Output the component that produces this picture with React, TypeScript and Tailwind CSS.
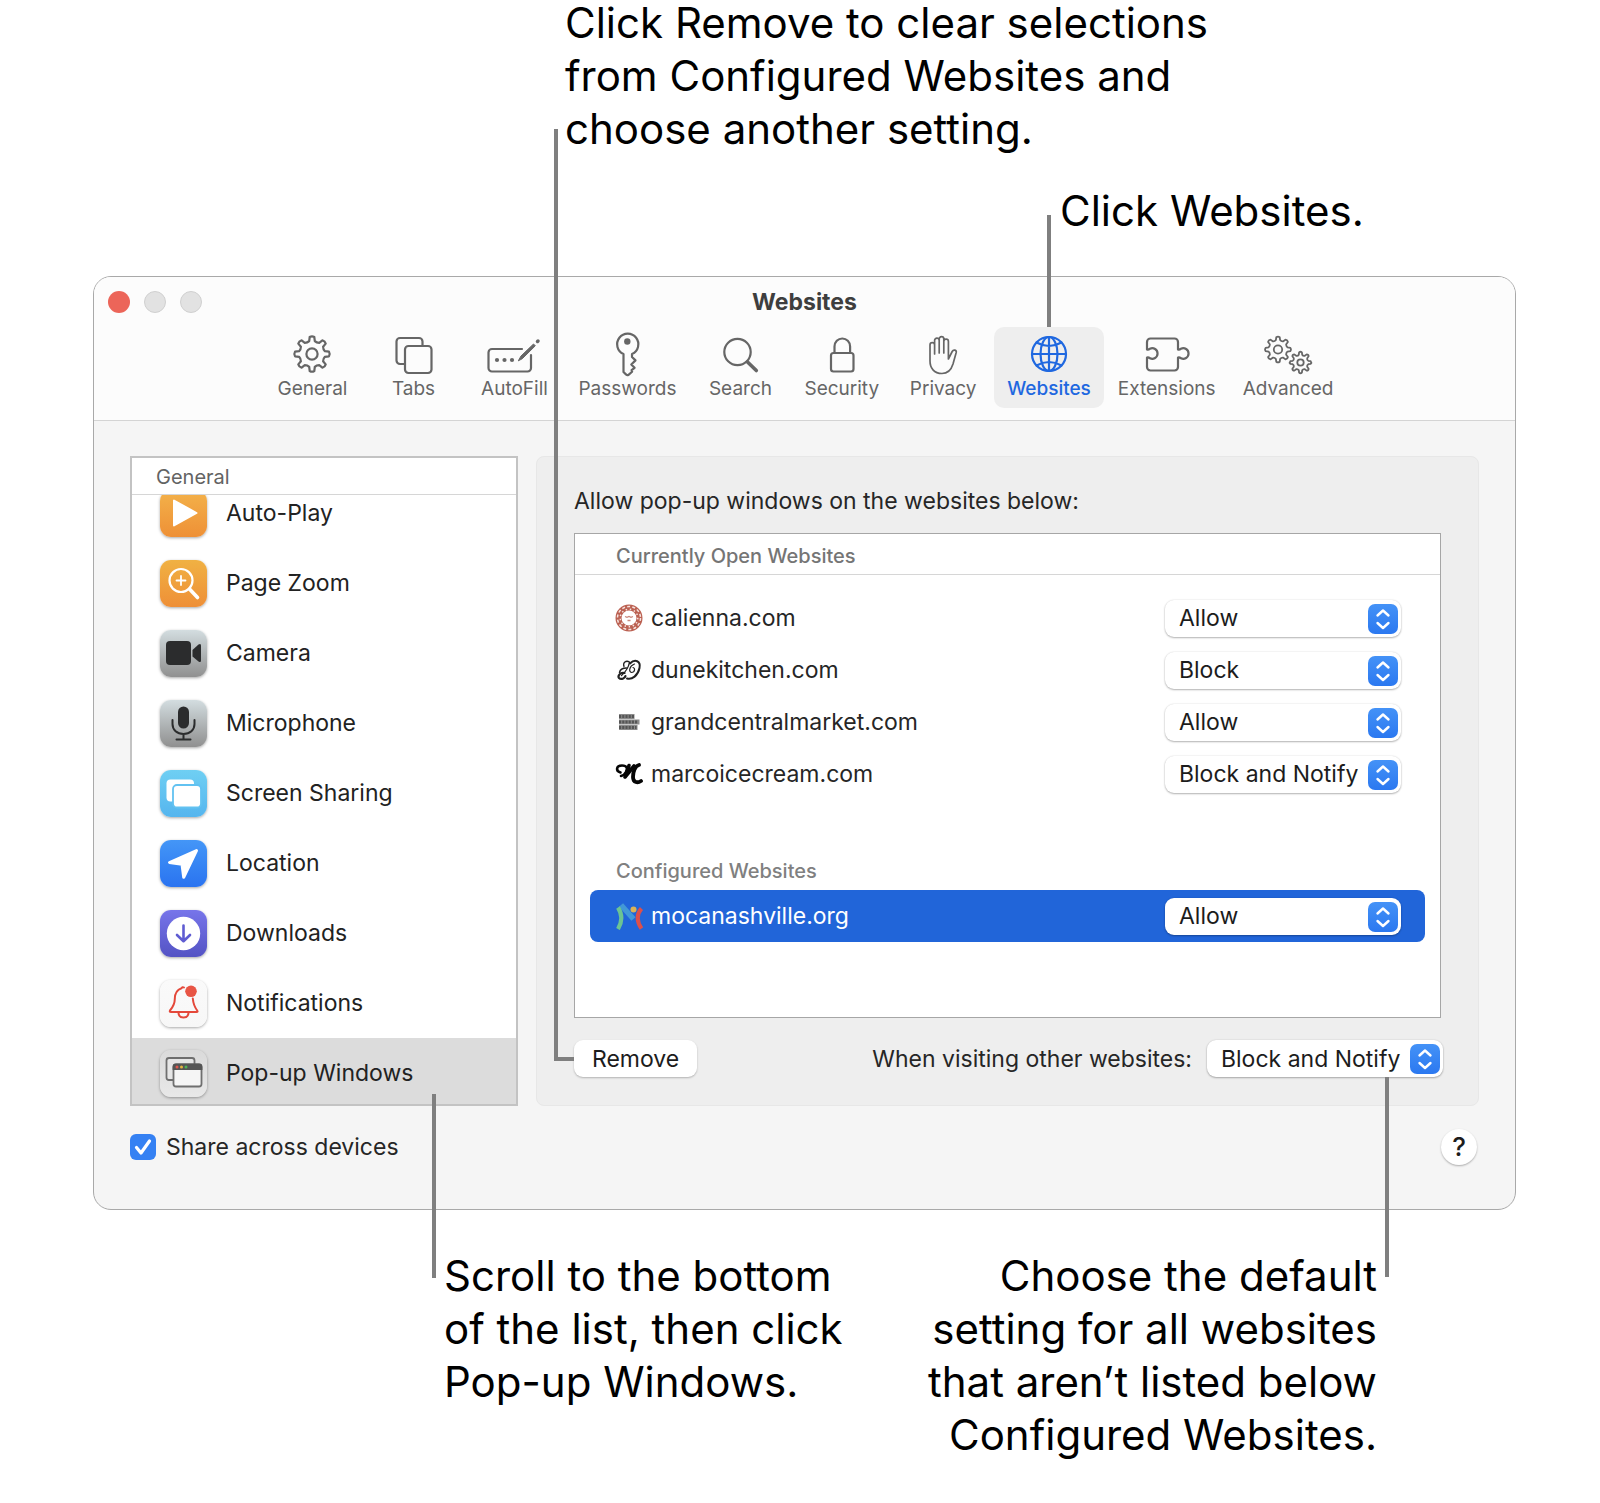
import React from 'react';

const CALLOUT = 'text-[42px] leading-[53px] text-black';
const LEADER = 'absolute z-10 pointer-events-none border-[#7f7f7f]';

// Outline of a cog wheel with flat-topped teeth
const gearPath = (cx: number, cy: number, outer: number, inner: number, teeth: number) => {
  const step = (Math.PI * 2) / teeth;
  const pt = (r: number, a: number) =>
    `${(cx + r * Math.sin(a)).toFixed(1)} ${(cy - r * Math.cos(a)).toFixed(1)}`;
  let d = '';
  for (let i = 0; i < teeth; i++) {
    const a = i * step;
    d += `${i === 0 ? 'M' : 'L'}${pt(inner, a - step * 0.27)}`;
    d += `L${pt(outer - 0.6, a - step * 0.17)}`;
    d += `Q${pt(outer + 0.6, a)} ${pt(outer - 0.6, a + step * 0.17)}`;
    d += `L${pt(inner, a + step * 0.27)}`;
    d += `Q${pt(inner - 1.2, a + step * 0.5)} ${pt(inner, a + step * 0.73)}`;
  }
  return d + 'Z';
};

const tools: { name: string; icon: React.ReactNode }[] = [
  {
    name: 'General',
    icon: (
      <>
        <path d={gearPath(28, 22, 17.8, 13.2, 8)} />
        <circle cx="28" cy="22" r="5.6" />
      </>
    ),
  },
  {
    name: 'Tabs',
    icon: (
      <>
        <path d="M20 32h-5a3.5 3.5 0 0 1-3.5-3.5v-19A3.5 3.5 0 0 1 15 6h19a3.5 3.5 0 0 1 3.5 3.5V14" />
        <rect x="20" y="14" width="26.5" height="27" rx="3.5" />
      </>
    ),
  },
  {
    name: 'AutoFill',
    icon: (
      <>
        <path d="M36 17H6a3.5 3.5 0 0 0-3.5 3.5V36A3.5 3.5 0 0 0 6 39.500h35.500A3.500 3.500 0 0 0 45 36V23" />
        <path d="M32.500 28.500L35 24l12.500-12 1.800 1.800L36.500 26.500z" fill="currentColor" strokeWidth="1" />
        <path d="M51.500 9.500l.5-.5" strokeWidth="3.500" />
        <g fill="currentColor" stroke="none">
          <circle cx="11" cy="28" r="2.100" />
          <circle cx="18.500" cy="28" r="2.100" />
          <circle cx="26" cy="28" r="2.100" />
        </g>
      </>
    ),
  },
  {
    name: 'Passwords',
    icon: (
      <>
        <path d="M24.500 22A10.600 10.600 0 1 1 33 22v3l3.500 3.400-4.200 4.100 3.300 3.300-3 2.400.5 1.500-3.600 3.200q-1.300.8-2.300-.3L24.500 40z" />
        <circle cx="28.300" cy="9.500" r="3.200" fill="currentColor" stroke="none" />
      </>
    ),
  },
  {
    name: 'Search',
    icon: (
      <>
        <circle cx="25.500" cy="20" r="13.200" />
        <path d="M35.500 30l8.800 8.500" strokeWidth="3.600" />
      </>
    ),
  },
  {
    name: 'Security',
    icon: (
      <>
        <rect x="17" y="21" width="22.500" height="18.500" rx="2.500" />
        <path d="M20.500 21v-6.500a7.800 8 0 0 1 15.600 0V21" />
      </>
    ),
  },
  {
    name: 'Privacy',
    icon: (
      <path
        strokeWidth="1.700"
        d="M15 29V13a2.300 2.300 0 0 1 4.600 0V22M19.600 21V8.500a2.300 2.300 0 0 1 4.600 0V21M24.200 20V7a2.300 2.300 0 0 1 4.600 0V21M28.800 20V9.500a2.300 2.300 0 0 1 4.600 0V27l3.800-7.500c1.300-2.500 4.600-1.500 4 1L38 32c-2 6.500-6 9.500-11 9.500-8 0-12-5.500-12-12.500"
      />
    ),
  },
  {
    name: 'Websites',
    icon: (
      <>
        <circle cx="28" cy="22" r="17" />
        <ellipse cx="28" cy="22" rx="8.500" ry="17" />
        <path d="M28 5v34M11 22h34M15.500 10.500q12.500 7 25 0M15.500 33.500q12.500-7 25 0" />
      </>
    ),
  },
  {
    name: 'Extensions',
    icon: (
      <path d="M8 17.500V10a3.500 3.500 0 0 1 3.500-3.500h24A3.500 3.500 0 0 1 39 10v7.500q1.500.5 3-.8a5.300 5.300 0 1 1 0 9.600q-1.500-1.300-3-.8V35a3.500 3.500 0 0 1-3.500 3.500h-24A3.500 3.500 0 0 1 8 35v-9.500q1.500-.5 3 .8a5.300 5.300 0 1 0 0-9.600q-1.500 1.300-3 .8z" />
    ),
  },
  {
    name: 'Advanced',
    icon: (
      <g strokeWidth="1.800">
        <path d={gearPath(18, 17.5, 13, 9.8, 8)} />
        <circle cx="18" cy="17.500" r="4.200" />
        <path d={gearPath(40.5, 30.5, 10.8, 8, 8)} />
        <circle cx="40.500" cy="30.500" r="3.200" />
      </g>
    ),
  },
];

const categories: { name: string; tile: string; icon: React.ReactNode }[] = [
  {
    name: 'Auto-Play',
    tile: 'from-[#f3b24a] to-[#ee9036]',
    icon: <path d="M14 10.500v25l22.500-12.500z" fill="#fff" stroke="#fff" strokeWidth="2" strokeLinejoin="round" />,
  },
  {
    name: 'Page Zoom',
    tile: 'from-[#f0b143] to-[#ee8f37]',
    icon: (
      <g fill="none" stroke="#fff" strokeLinecap="round">
        <circle cx="21" cy="20.500" r="11.500" strokeWidth="2.200" />
        <path d="M29.500 29l8 8.500" strokeWidth="3.600" />
        <path d="M21 16v9M16.500 20.500h9" strokeWidth="1.800" />
      </g>
    ),
  },
  {
    name: 'Camera',
    tile: 'from-[#d3dde0] to-[#909090]',
    icon: (
      <g fill="#2b2c2d">
        <rect x="6" y="11" width="25" height="24" rx="4" />
        <path d="M32.500 20l6-5.500q2.500-1.500 2.500 1v15q0 2.500-2.500 1l-6-5z" />
      </g>
    ),
  },
  {
    name: 'Microphone',
    tile: 'from-[#d3dde0] to-[#909090]',
    icon: (
      <g fill="none" stroke="#2b2c2d" strokeWidth="2" strokeLinecap="round">
        <rect x="18" y="6.500" width="11" height="22" rx="5.500" fill="#2b2c2d" stroke="none" />
        <path d="M12.500 20v4c0 6 4.500 10 11 10s11-4 11-10v-4M23.500 34v5.500M16.500 39.500h14" />
      </g>
    ),
  },
  {
    name: 'Screen Sharing',
    tile: 'from-[#6fcff3] to-[#55b5ee]',
    icon: (
      <g fill="#fff">
        <rect x="6.500" y="9.500" width="27.500" height="22" rx="4" />
        <rect x="13" y="15" width="28" height="22.500" rx="4" stroke="#62c2f1" strokeWidth="1.800" />
      </g>
    ),
  },
  {
    name: 'Location',
    tile: 'from-[#4496f7] to-[#2a73f0]',
    icon: (
      <path
        d="M36.500 10.500L9.500 22.500l12.500 1.800 1.700 13z"
        fill="#fff"
        stroke="#fff"
        strokeWidth="3"
        strokeLinejoin="round"
      />
    ),
  },
  {
    name: 'Downloads',
    tile: 'from-[#7775ea] to-[#5453c4]',
    icon: (
      <>
        <circle cx="23.500" cy="23.500" r="16.700" fill="#fff" />
        <path
          d="M23.500 15.500V31M17 25l6.500 6.200L30 25"
          fill="none"
          stroke="#5f5cd2"
          strokeWidth="2.600"
          strokeLinecap="round"
          strokeLinejoin="round"
        />
      </>
    ),
  },
  {
    name: 'Notifications',
    tile: 'from-[#fafafa] to-[#f7f7f7]',
    icon: (
      <g fill="none" stroke="#e4483a" strokeWidth="2" strokeLinecap="round" strokeLinejoin="round">
        <path d="M24 7.500q-1.500-1-2.500.7C16 10 14.800 14 14.800 19c0 5-1.800 8-4.800 11.500q-.8 1.500 1 1.500h25.500q1.800 0 .7-1.500C34.500 27 33.200 23 32.800 18.500" />
        <path d="M18.500 33c.5 6 9.500 6 10 0" />
        <circle cx="31" cy="11.300" r="5.800" fill="#e85545" stroke="none" />
      </g>
    ),
  },
  {
    name: 'Pop-up Windows',
    tile: 'from-[#dadada] to-[#e8e8e8]',
    icon: (
      <g stroke="#6f6f6f" strokeWidth="1.800">
        <rect x="6.500" y="8" width="28" height="22" rx="2.500" fill="#e6e6e6" />
        <rect x="13.500" y="14.500" width="28" height="22" rx="2.500" fill="#f5f5f5" />
        <path d="M13.500 19v-2q0-2.500 2.500-2.500h23q2.500 0 2.500 2.500v2z" fill="#555" stroke="#555" />
        <g stroke="none">
          <circle cx="17" cy="17" r="1.500" fill="#e0564c" />
          <circle cx="21.500" cy="17" r="1.500" fill="#e5b53e" />
          <circle cx="26" cy="17" r="1.500" fill="#4fb356" />
        </g>
      </g>
    ),
  },
];

const sites: { name: string; value: string; icon: React.ReactNode }[] = [
  {
    name: 'calienna.com',
    value: 'Allow',
    icon: (
      <g fill="none">
        <circle cx="14" cy="14" r="10.500" stroke="#bb6152" strokeWidth="6" />
        <circle cx="14" cy="14" r="11.500" stroke="#f6e3df" strokeWidth="1.500" strokeDasharray="3 2.200" />
        <circle cx="14" cy="14" r="8.800" stroke="#f6e3df" strokeWidth="1.500" strokeDasharray="1.500 2.700" />
        <path d="M10 12.500l2 .8 2-.8 2 .8 2-.8M12.500 16.500h3" stroke="#c9867b" strokeWidth="1.300" />
      </g>
    ),
  },
  {
    name: 'dunekitchen.com',
    value: 'Block',
    icon: (
      <g fill="none" stroke="#222" strokeLinecap="round">
        <path d="M9 10.500C7.500 6.500 11 4 14.500 6c-1 6-4 10-8 13.500" strokeWidth="1.300" />
        <path d="M15 7.500c5-5 11-2.500 9.500 4.500-1.500 7.500-7.500 12-12.500 10.500" strokeWidth="2" />
        <path d="M19.500 8c-5.500 2-6 8-3 8.500 3.500 0 4-4.500 1.500-5" strokeWidth="1.200" />
        <path d="M11.500 12C7 12 5 14 4.500 16.500" strokeWidth="1.500" />
        <path d="M9.500 17C5 16 2.500 20 4 22c2 2 6 .5 6.500-2" strokeWidth="2.200" />
      </g>
    ),
  },
  {
    name: 'grandcentralmarket.com',
    value: 'Allow',
    icon: (
      <g fill="none" stroke="#8c8c8c" strokeWidth="5">
        <path d="M4 8.500h15.500M4 14h20.500M4 19.500h18.500" />
        <path d="M4 8.500h15.500M4 14h19M4 19.500h17.500" stroke="#555" strokeWidth="3" strokeDasharray="2.200 1" />
      </g>
    ),
  },
  {
    name: 'marcoicecream.com',
    value: 'Block and Notify',
    icon: (
      <g fill="none" stroke="#050505" strokeLinecap="round" strokeLinejoin="round">
        <path d="M5.500 12.500C.5 11 1 5.500 7 5.500c5 0 6 3 4 6.500-1 2-3 3.500-5 4" strokeWidth="2.600" />
        <path d="M14 5.500L10 17l9-11" strokeWidth="3.600" />
        <path d="M24 5c-4 1-6 7-6 12 0 6 5 6 8 4" strokeWidth="3.800" />
      </g>
    ),
  },
];

const MocaIcon = () => (
  <svg viewBox="0 0 28 28" className="h-7 w-7 shrink-0" fill="none" aria-hidden="true">
    <path d="M6 3l12.500 14" stroke="#4298d8" strokeWidth="5.500" />
    <path d="M3 5.500c4.500 7 4.500 14 0 21.500" stroke="#6cc493" strokeWidth="4.200" />
    <path d="M26.500 6.500c-5.500 6-4.500 14 0 20" stroke="#dd4f4a" strokeWidth="4.200" />
    <circle cx="18.500" cy="7.500" r="3" fill="#dcb356" />
  </svg>
);

const PopUp: React.FC<{ id: string; value: string }> = ({ id, value }) => (
  <div className="relative w-[236px]">
    <select
      id={id}
      defaultValue={value}
      className="block h-[37px] w-full appearance-none rounded-[9px] bg-white pr-8 pl-[14px] text-[23px] leading-[30px] text-[#1c1c1c] shadow-[0_1px_2px_rgba(0,0,0,0.28),0_0_2px_rgba(0,0,0,0.12)]"
    >
      <option>Allow</option>
      <option>Block</option>
      <option>Block and Notify</option>
    </select>
    <span className="pointer-events-none absolute top-1 right-[3px] flex h-[30px] w-[30px] items-center justify-center rounded-[7px] bg-linear-to-b from-[#4492f7] to-[#2b78f0]">
      <svg
        viewBox="0 0 30 30"
        className="h-[30px] w-[30px]"
        fill="none"
        stroke="#fff"
        strokeWidth="2.400"
        strokeLinecap="round"
        strokeLinejoin="round"
      >
        <path d="M9.500 11.500L15 6.500l5.500 5M9.500 19l5.500 5 5.500-5" />
      </svg>
    </span>
  </div>
);

const Toolbar: React.FC = () => (
  <header className="rounded-t-[17px] border-b border-[#d4d4d4] bg-[#fcfcfc] pb-3">
    <div className="grid h-[50px] grid-cols-[1fr_auto_1fr] items-center">
      <div className="flex gap-[14px] pl-[14px]">
        <button type="button" aria-label="Close" className="h-[22px] w-[22px] rounded-full bg-[#ec6559]" />
        <button type="button" aria-label="Minimize" className="h-[22px] w-[22px] rounded-full border border-[#d0d0d0] bg-[#e2e2e2]" />
        <button type="button" aria-label="Zoom" className="h-[22px] w-[22px] rounded-full border border-[#d0d0d0] bg-[#e2e2e2]" />
      </div>
      <h1 className="text-[23px] leading-[30px] font-bold text-[#3e3e3e]">Websites</h1>
    </div>
    <nav className="flex justify-center gap-px">
      {tools.map((tool) => {
        const active = tool.name === 'Websites';
        return (
          <button
            key={tool.name}
            type="button"
            className={`relative flex min-w-[100px] flex-col items-center rounded-[10px] px-[13px] pt-[5px] pb-[7px] ${
              active ? 'bg-[#eeeeee] font-medium text-[#1f68e0]' : 'text-[#666666]'
            }`}
          >
            {active && <span className={`${LEADER} bottom-full left-1/2 h-28 -translate-x-1/2 border-l-4`} />}
            <svg
              viewBox="0 0 56 44"
              className="h-11 w-14 overflow-visible"
              fill="none"
              stroke="currentColor"
              strokeWidth="2.200"
              strokeLinecap="round"
              strokeLinejoin="round"
              aria-hidden="true"
            >
              {tool.icon}
            </svg>
            <span className="mt-px text-[19px] leading-6">{tool.name}</span>
          </button>
        );
      })}
    </nav>
  </header>
);

const Sidebar: React.FC = () => (
  <aside className="relative h-[650px] w-[388px] shrink-0">
    <div className="flex h-full flex-col border-2 border-[#c3c3c3] bg-white">
      <h2 className="h-[37px] shrink-0 border-b border-[#d6d6d6] pl-6 text-[20px] leading-[38px] text-[#636363]">General</h2>
      <div className="flex-1 overflow-hidden">
        <ul className="-mt-[17px]">
          {categories.map(({ name, tile, icon }) => (
            <li key={name}>
              <button
                type="button"
                className={`flex h-[70px] w-full items-center gap-[19px] pl-7 text-left text-[23px] leading-[30px] text-[#222222] ${
                  name === 'Pop-up Windows' ? 'bg-[#dcdcdc]' : ''
                }`}
              >
                <span className={`h-[47px] w-[47px] shrink-0 rounded-[11px] bg-linear-to-b shadow-[0_1px_3px_rgba(0,0,0,0.35)] ${tile}`}>
                  <svg viewBox="0 0 47 47" className="h-full w-full" aria-hidden="true">{icon}</svg>
                </span>
                {name}
              </button>
            </li>
          ))}
        </ul>
      </div>
    </div>
    <span className={`${LEADER} -bottom-[172px] left-[302px] h-[184px] border-l-4`} />
  </aside>
);

const SitesPanel: React.FC = () => (
  <section className="min-w-0 flex-1 rounded-[8px] border border-[#e7e7e7] bg-[#eeeeee] px-[37px] pt-[29px] text-[23px] leading-[30px] text-[#262626]">
    <p>Allow pop-up windows on the websites below:</p>
    <div className="mt-[17px] border border-[#a6a6a6] bg-white pb-[75px]">
      <h3 className="h-[41px] border-b border-[#d6d6d6] pl-[41px] text-[20px] leading-[44px] font-medium text-[#757575]">
        Currently Open Websites
      </h3>
      <ul className="px-[15px] pt-[17px]">
        {sites.map(({ name, value, icon }) => (
          <li key={name} className="flex h-13 items-center gap-2 pr-6 pl-[25px]">
            <svg viewBox="0 0 28 28" className="h-7 w-7 shrink-0" aria-hidden="true">{icon}</svg>
            <label htmlFor={name} className="flex-1">{name}</label>
            <PopUp id={name} value={value} />
          </li>
        ))}
      </ul>
      <h3 className="mt-[57px] pl-[41px] text-[20px] leading-7 font-medium text-[#808080]">Configured Websites</h3>
      <div className="mx-[15px] mt-[5px] flex h-13 items-center gap-2 rounded-[8px] bg-[#2165d9] pr-6 pl-[25px] text-white">
        <MocaIcon />
        <label htmlFor="mocanashville.org" className="flex-1">mocanashville.org</label>
        <PopUp id="mocanashville.org" value="Allow" />
      </div>
    </div>
    <div className="-mr-0.5 mt-[22px] flex items-center justify-between">
      <div className="relative">
        <span className={`${LEADER} right-full bottom-4 h-[932px] w-5 border-b-4 border-l-4`} />
        <button
          type="button"
          className="block h-[37px] rounded-[9px] bg-white px-[18px] text-[#1c1c1c] shadow-[0_1px_2px_rgba(0,0,0,0.25)]"
        >
          Remove
        </button>
      </div>
      <div className="relative flex items-center gap-[15px]">
        <label htmlFor="other-websites">When visiting other websites:</label>
        <PopUp id="other-websites" value="Block and Notify" />
        <span className={`${LEADER} top-full right-[54px] h-[200px] border-l-4`} />
      </div>
    </div>
  </section>
);

export default function App() {
  return (
    <main className="bg-white pb-10 font-['Inter',sans-serif]">
      <p className={`-mt-1 pl-[565px] ${CALLOUT}`}>
        Click Remove to clear selections
        <br />
        from Configured Websites and
        <br />
        choose another setting.
      </p>
      <p className={`mt-[29px] pl-[1060px] ${CALLOUT}`}>Click Websites.</p>

      <div className="mt-[39px] mr-[84px] ml-[93px] rounded-[18px] border border-[#a9a9a9] bg-[#f5f5f5]">
        <Toolbar />
        <div className="flex gap-[18px] px-9 pt-[35px]">
          <Sidebar />
          <SitesPanel />
        </div>
        <footer className="mt-[23px] flex items-center justify-between pr-[38px] pb-11 pl-9">
          <label className="flex items-center gap-[10px] text-[23px] leading-[30px] text-[#262626]">
            <span className="relative h-[26px] w-[26px]">
              <input
                type="checkbox"
                defaultChecked
                className="block h-[26px] w-[26px] appearance-none rounded-[6px] bg-[#b8b8b8] checked:bg-[#3581f3]"
              />
              <svg
                viewBox="0 0 26 26"
                className="pointer-events-none absolute inset-0"
                fill="none"
                stroke="#fff"
                strokeWidth="3.200"
                strokeLinecap="round"
                strokeLinejoin="round"
              >
                <path d="M6.500 13.500l4.500 5.500L19.500 7" />
              </svg>
            </span>
            Share across devices
          </label>
          <button
            type="button"
            aria-label="Help"
            className="h-9 w-9 rounded-full bg-white text-[26px] leading-9 font-medium text-[#1c1c1c] shadow-[0_1px_2px_rgba(0,0,0,0.3)]"
          >
            ?
          </button>
        </footer>
      </div>

      <div className="mt-[39px] flex justify-between pr-[223px] pl-[444px]">
        <p className={CALLOUT}>
          Scroll to the bottom
          <br />
          of the list, then click
          <br />
          Pop-up Windows.
        </p>
        <p className={`text-right ${CALLOUT}`}>
          Choose the default
          <br />
          setting for all websites
          <br />
          that aren’t listed below
          <br />
          Configured Websites.
        </p>
      </div>
    </main>
  );
}
